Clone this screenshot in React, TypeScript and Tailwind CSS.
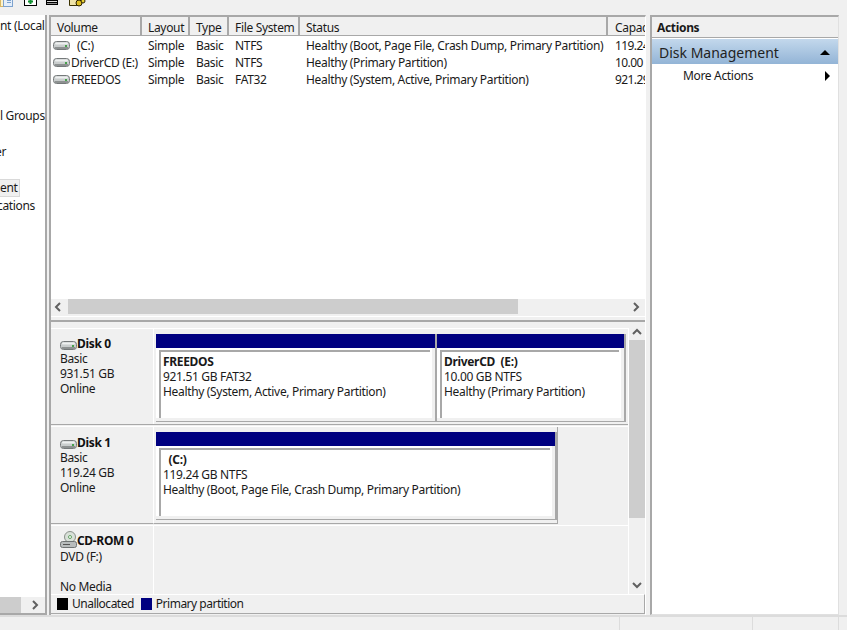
import { ReactNode } from "react";

const columns = [
	{ label: "Volume", width: "w-[91px]", pad: "pl-[6px]" },
	{ label: "Layout", width: "w-[48px]", pad: "pl-[6px]" },
	{ label: "Type", width: "w-[39px]", pad: "pl-[6px]" },
	{ label: "File System", width: "w-[71px]", pad: "pl-[6px]" },
	{ label: "Status", width: "w-[308px]", pad: "pl-[6px]" },
	{ label: "Capacity", width: "w-[37px]", pad: "pl-[7px]" },
];

const volumes = [
	{ name: "(C:)", indent: "pl-[6px]", status: "Healthy (Boot, Page File, Crash Dump, Primary Partition)", fs: "NTFS", cap: "119.24" },
	{ name: "DriverCD (E:)", indent: "", status: "Healthy (Primary Partition)", fs: "NTFS", cap: "10.00" },
	{ name: "FREEDOS", indent: "", status: "Healthy (System, Active, Primary Partition)", fs: "FAT32", cap: "921.29" },
];

const DriveIcon = () => (
	<svg width="18" height="11" viewBox="0 0 18 11" className="shrink-0">
		<rect x="0.5" y="1.5" width="16" height="8" rx="3" fill="#c9cdcd" stroke="#75797a" />
		<rect x="2" y="2.5" width="13" height="2" rx="1" fill="#eef0f0" />
		<rect x="2" y="7" width="13" height="2" fill="#8d9191" />
		<rect x="12" y="5" width="2" height="2" fill="#47a04c" />
	</svg>
);

const DvdIcon = () => (
	<svg width="18" height="17" viewBox="0 0 18 17" className="shrink-0">
		<circle cx="10" cy="6" r="5.5" fill="#d8e0d8" stroke="#8a908a" />
		<circle cx="10" cy="6" r="1.5" fill="#ffffff" stroke="#62a062" />
		<rect x="0.5" y="10.5" width="16" height="6" rx="2" fill="#b8bcbc" stroke="#6f7373" />
		<rect x="3" y="13" width="7" height="1" fill="#555555" />
	</svg>
);

const Chevron = ({ dir }: { dir: "left" | "right" | "up" | "down" }) => {
	const points = {
		left: "6,1 2,5 6,9",
		right: "2,1 6,5 2,9",
		up: "1,6 5,2 9,6",
		down: "1,2 5,6 9,2",
	}[dir];
	return (
		<svg width="10" height="10" viewBox="0 0 10 10" className="shrink-0">
			<polyline points={points} fill="none" stroke="#606060" strokeWidth="2" />
		</svg>
	);
};

// toolbar glyphs, only their lower part is inside the window
const Toolbar = () => (
	<svg width="90" height="8" viewBox="0 0 90 8" className="shrink-0">
		<rect x="0.5" y="-2" width="3" height="8.5" fill="#fff3c8" stroke="#d9b765" />
		<rect x="3.5" y="-2" width="9" height="8.5" fill="#e4eefa" stroke="#7da2ce" />
		<rect x="7" y="0" width="4" height="1" fill="#7da2ce" />
		<rect x="7" y="2" width="4" height="1" fill="#7da2ce" />
		<rect x="24.5" y="-2" width="12" height="7.5" fill="#ffffff" stroke="#000000" />
		<path d="M30.5 -1 V4 M28 1.5 H33" stroke="#109030" strokeWidth="2" />
		<rect x="46" y="-1" width="12" height="6" fill="#000000" />
		<rect x="47" y="1" width="10" height="1" fill="#d8d8d8" />
		<rect x="47" y="3" width="10" height="1" fill="#909090" />
		<path d="M69.5 -1 H78 L80 5.5 H69.5 Z" fill="#efe3a8" stroke="#3a3000" />
		<circle cx="79" cy="3" r="3" fill="#e0c020" stroke="#2a2000" />
		<circle cx="83" cy="1" r="2" fill="#e8cf30" stroke="#2a2000" />
	</svg>
);

const Partition = ({
	width,
	name,
	size,
	status,
}: {
	width: string;
	name: string;
	size: string;
	status: string;
}) => (
	<div className={`${width} h-[88px] shrink-0 border-r-2 border-b border-[#a8a8a8] flex flex-col`}>
		<div className="h-[14px] bg-[#000080] shrink-0" />
		<div className="flex-1 pr-[3px] pb-[3px] min-h-0">
			<div className="h-full bg-white pt-[2px] pl-[3px] pr-[2px]">
				<div className="h-full border-t-2 border-l-2 border-[#a8a8a8] pl-[2px] pt-[2px] leading-[15px]">
					<div className="font-bold whitespace-pre">{name}</div>
					<div>{size}</div>
					<div className="whitespace-nowrap">{status}</div>
				</div>
			</div>
		</div>
	</div>
);

const DiskLabel = ({
	icon,
	name,
	pad,
	children,
}: {
	icon: ReactNode;
	name: string;
	pad: string;
	children: ReactNode;
}) => (
	<div className={`${pad} w-[103px] shrink-0 border-r border-white pl-[9px] leading-[15px]`}>
		<div className="flex items-end font-bold h-[15px] text-[#111111]">
			{icon}
			<span className="-ml-px">{name}</span>
		</div>
		{children}
	</div>
);

export default function App() {
	return (
		<div className="w-[847px] h-[630px] bg-[#f0f0f0] flex flex-col overflow-hidden text-[12px] tracking-[-0.33px] text-[#1a1a1a] font-['Noto_Sans',sans-serif]">
			{/* toolbar, cut off at the top */}
			<div className="h-[15px] flex shrink-0 overflow-hidden">
				<Toolbar />
			</div>

			<div className="h-[600px] flex items-stretch">
				{/* console tree */}
				<div className="w-[47px] shrink-0 bg-white border-r-2 border-b-2 border-[#a8a8a8] overflow-hidden">
					<div className="mt-[3px] leading-[16px] whitespace-nowrap">nt (Local</div>
					<div className="mt-[74px] leading-[16px] whitespace-nowrap">l Groups</div>
					<div className="mt-[20px] leading-[16px] whitespace-nowrap -ml-[5px]">er</div>
					<div className="mt-[19px] leading-[16px] w-[20px] bg-[#f0f0f0] border border-[#d9d9d9] border-l-0 whitespace-nowrap">ent</div>
					<div className="mt-px leading-[16px] whitespace-nowrap -ml-[3px]">cations</div>
					<div className="mt-[383px] h-[16px] bg-[#f0f0f0] flex items-center">
						<div className="w-[21px] h-[16px] bg-[#cdcdcd]" />
						<div className="ml-[10px]">
							<Chevron dir="right" />
						</div>
					</div>
				</div>

				{/* center pane */}
				<div className="w-[597px] ml-[2px] shrink-0 flex flex-col border-l-2 border-t-2 border-r border-l-[#a8a8a8] border-t-[#a8a8a8] border-r-white pb-px bg-[#f0f0f0]">
					<div className="flex h-[19px] shrink-0 border-b border-[#a8a8a8] overflow-hidden">
						{columns.map((col, idx) => (
							<div
								key={`${idx}_col`}
								className={`${col.width} ${col.pad} shrink-0 leading-[21px] border-r-2 border-[#a8a8a8] last:border-r-0 whitespace-nowrap overflow-hidden`}
							>
								{col.label}
							</div>
						))}
					</div>
					<div className="flex-1 pt-px bg-white min-h-0">
						{volumes.map((v, idx) => (
							<div key={`${idx}_vol`} className="flex h-[17px] items-center whitespace-nowrap overflow-hidden">
								<div className="w-[91px] shrink-0 flex items-center pl-[2px]">
									<DriveIcon />
									<span className={v.indent}>{v.name}</span>
								</div>
								<div className="w-[48px] shrink-0 pl-[6px]">Simple</div>
								<div className="w-[39px] shrink-0 pl-[6px]">Basic</div>
								<div className="w-[71px] shrink-0 pl-[6px]">{v.fs}</div>
								<div className="w-[308px] shrink-0 pl-[6px]">{v.status}</div>
								<div className="w-[37px] shrink-0 pl-[7px] overflow-hidden tracking-[-0.6px]">{v.cap}</div>
							</div>
						))}
					</div>
					<div className="h-[17px] shrink-0 flex items-start px-[3px]">
						<div className="h-[15px] flex items-center">
							<Chevron dir="left" />
						</div>
						<div className="ml-[4px] w-[450px] h-[15px] bg-[#cdcdcd]" />
						<div className="flex-1" />
						<div className="h-[15px] flex items-center">
							<Chevron dir="right" />
						</div>
					</div>
					<div className="h-[7px] shrink-0 border-t border-white pt-[3px]">
						<div className="h-[2px] bg-[#a8a8a8]" />
					</div>

					{/* graphical view */}
					<div className="h-[271px] shrink-0 flex pt-[5px]">
						<div className="flex-1 flex flex-col border-r border-white">
							<div className="h-[99px] flex flex-col border-t border-white">
								<div className="flex-1 flex border-b border-[#a8a8a8] mb-px">
									<DiskLabel icon={<DriveIcon />} name="Disk 0" pad="pt-[7px]">
										<div>Basic</div>
										<div>931.51 GB</div>
										<div>Online</div>
									</DiskLabel>
									<div className="pt-[5px] pl-[2px] flex">
										<Partition width="w-[281px]" name="FREEDOS" size="921.51 GB FAT32" status="Healthy (System, Active, Primary Partition)" />
										<Partition width="w-[189px]" name="DriverCD  (E:)" size="10.00 GB NTFS" status="Healthy (Primary Partition)" />
									</div>
								</div>
							</div>
							<div className="h-[100px] flex flex-col border-t border-white">
								<div className="flex-1 flex mb-px">
									<DiskLabel icon={<DriveIcon />} name="Disk 1" pad="pt-[8px] border-b border-b-[#a8a8a8]">
										<div>Basic</div>
										<div>119.24 GB</div>
										<div>Online</div>
									</DiskLabel>
									<div className="pt-[5px] pl-[2px] w-[404px] h-[97px] flex border-r border-b border-[#a8a8a8] pb-[3px]">
										<Partition width="w-[401px]" name="  (C:)" size="119.24 GB NTFS" status="Healthy (Boot, Page File, Crash Dump, Primary Partition)" />
									</div>
								</div>
							</div>
							<div className="flex-1 flex border-t border-white">
								<DiskLabel icon={<DvdIcon />} name="CD-ROM 0" pad="pt-[7px]">
									<div className="mt-px">DVD (F:)</div>
									<div className="mt-[15px]">No Media</div>
								</DiskLabel>
							</div>
						</div>
						<div className="w-[16px] shrink-0 flex flex-col items-center pb-[3px]">
							<Chevron dir="up" />
							<div className="w-full h-[178px] mt-[2px] bg-[#cdcdcd]" />
							<div className="flex-1" />
							<Chevron dir="down" />
						</div>
					</div>

					{/* legend */}
					<div className="h-[20px] shrink-0 border-t border-white border-r border-b border-r-[#a8a8a8] border-b-[#a8a8a8] flex items-center pl-[6px] tracking-[-0.5px]">
						<div className="w-[11px] h-[12px] bg-black" />
						<span className="ml-[4px]">Unallocated</span>
						<div className="ml-[7px] w-[11px] h-[12px] bg-[#000080]" />
						<span className="ml-[4px]">Primary partition</span>
					</div>
				</div>

				{/* actions pane */}
				<div className="w-[189px] ml-[4px] shrink-0 flex flex-col border-l-2 border-t-2 border-r border-b border-l-[#a8a8a8] border-t-[#a8a8a8] border-r-[#e0e0e0] border-b-[#e0e0e0] bg-white">
					<div className="h-[21px] shrink-0 bg-[#f0f0f0] border-b border-[#a8a8a8] pl-[5px] font-bold leading-[22px]">Actions</div>
					<div className="h-[25px] shrink-0 mt-px bg-gradient-to-b from-[#c3d8ec] to-[#93b4d6] flex items-center justify-between pl-[7px] pr-[8px] pt-[2px] text-[14px] tracking-normal text-[#222222]">
						<span>Disk Management</span>
						<span className="w-0 h-0 border-x-[5px] border-x-transparent border-b-[5px] border-b-black" />
					</div>
					<div className="h-[24px] shrink-0 flex items-center justify-between pl-[31px] pr-[8px]">
						<span>More Actions</span>
						<span className="w-0 h-0 border-y-[5px] border-y-transparent border-l-[5px] border-l-black" />
					</div>
				</div>
			</div>

			{/* status bar */}
			<div className="flex-1 flex border-t-2 border-[#dcdcdc]">
				<div className="w-[620px] border-r border-[#dcdcdc]" />
				<div className="w-[133px] border-r border-[#dcdcdc]" />
				<div className="w-[86px] border-r border-[#dcdcdc]" />
			</div>
		</div>
	);
}
